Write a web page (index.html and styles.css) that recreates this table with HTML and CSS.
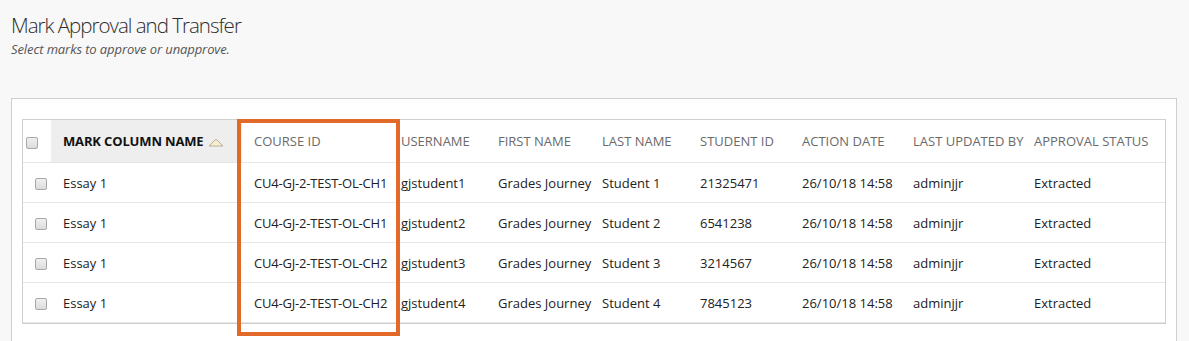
FILE: index.html
```html
<!DOCTYPE html>
<html lang="en">
<head>
<meta charset="utf-8">
<title>Mark Approval and Transfer</title>
<link rel="stylesheet" href="styles.css">
</head>
<body>
<div class="page">
  <h1 class="title">Mark Approval and Transfer</h1>
  <p class="subtitle">Select marks to approve or unapprove.</p>
  <div class="panel">
    <table class="grid">
      <colgroup>
        <col class="c0"><col class="c1"><col class="c2"><col class="c3"><col class="c4">
        <col class="c5"><col class="c6"><col class="c7"><col class="c8"><col class="c9">
      </colgroup>
      <thead>
        <tr>
          <th class="chk-cell head-chk"><span class="chk"></span></th>
          <th class="sorted">MARK COLUMN NAME <svg class="sort" width="16" height="9" viewBox="0 0 16 9"><path d="M1 8 L8 1.2 L15 8 Z" fill="#f7efcb" stroke="#b8b09a" stroke-width="1"/></svg></th>
          <th>COURSE ID</th>
          <th>USERNAME</th>
          <th>FIRST NAME</th>
          <th>LAST NAME</th>
          <th>STUDENT ID</th>
          <th>ACTION DATE</th>
          <th>LAST UPDATED BY</th>
          <th>APPROVAL STATUS</th>
        </tr>
      </thead>
      <tbody>
        <tr>
          <td class="chk-cell"><span class="chk"></span></td>
          <td>Essay 1</td><td class="cid">CU4-GJ-2-TEST-OL-CH1</td><td>gjstudent1</td><td>Grades Journey</td><td>Student 1</td><td>21325471</td><td>26/10/18 14:58</td><td>adminjjr</td><td>Extracted</td>
        </tr>
        <tr>
          <td class="chk-cell"><span class="chk"></span></td>
          <td>Essay 1</td><td class="cid">CU4-GJ-2-TEST-OL-CH1</td><td>gjstudent2</td><td>Grades Journey</td><td>Student 2</td><td>6541238</td><td>26/10/18 14:58</td><td>adminjjr</td><td>Extracted</td>
        </tr>
        <tr>
          <td class="chk-cell"><span class="chk"></span></td>
          <td>Essay 1</td><td class="cid">CU4-GJ-2-TEST-OL-CH2</td><td>gjstudent3</td><td>Grades Journey</td><td>Student 3</td><td>3214567</td><td>26/10/18 14:58</td><td>adminjjr</td><td>Extracted</td>
        </tr>
        <tr>
          <td class="chk-cell"><span class="chk"></span></td>
          <td>Essay 1</td><td class="cid">CU4-GJ-2-TEST-OL-CH2</td><td>gjstudent4</td><td>Grades Journey</td><td>Student 4</td><td>7845123</td><td>26/10/18 14:58</td><td>adminjjr</td><td>Extracted</td>
        </tr>
      </tbody>
    </table>
    <div class="highlight"></div>
  </div>
</div>
</body>
</html>
```

FILE: styles.css
```css
* { box-sizing: border-box; }
html, body { margin: 0; padding: 0; background: #f8f8f8; }
body { font-family: "Open Sans", "Liberation Sans", sans-serif; color: #333; }
.page { padding: 10px 12px 0 11px; }
.title {
  margin: 0;
  font-size: 20.5px;
  line-height: 30px;
  font-weight: 300;
  letter-spacing: -1px;
  color: #2e2e2e;
}
.subtitle {
  margin: 1px 0 0 0;
  font-size: 13px;
  line-height: 17px;
  font-style: italic;
  letter-spacing: -0.1px;
  color: #555;
}
.panel {
  position: relative;
  margin-top: 40px;
  background: #fff;
  border: 1px solid #cfcfcf;
  border-bottom: none;
  padding: 20px 10px 30px 10px;
}
.grid {
  width: 1144px;
  border-collapse: separate;
  border-spacing: 0;
  table-layout: fixed;
  border: 1px solid #cfcfcf;
}
.c0 { width: 28px; }
.c1 { width: 191px; }
.c2 { width: 147px; }
.c3 { width: 97px; }
.c4 { width: 104px; }
.c5 { width: 98px; }
.c6 { width: 102px; }
.c7 { width: 111px; }
.c8 { width: 121px; }
.c9 { width: 143px; }
.grid th, .grid td {
  padding: 0 0 0 12px;
  text-align: left;
  white-space: nowrap;
  font-size: 13px;
  border-bottom: 1px solid #e6e6e6;
}
.grid th {
  height: 43px;
  font-weight: 400;
  color: #6a6a6a;
}
.grid td {
  height: 40px;
  color: #222;
}
.grid td.cid { letter-spacing: -0.2px; }
.grid th.sorted {
  background: #eeeeee;
  color: #111;
  font-weight: 700;
  letter-spacing: -0.15px;
}
.sort { vertical-align: -1px; margin-left: 1px; }
.grid .chk-cell { padding: 0 0 0 12px; }
.grid .head-chk { padding-left: 3px; }
.chk {
  display: inline-block;
  width: 12px;
  height: 12px;
  border: 1px solid #a8a8a8;
  border-radius: 2px;
  background: linear-gradient(#f0f0f0, #dcdcdc);
  vertical-align: middle;
}
.highlight {
  position: absolute;
  left: 225px;
  top: 20px;
  width: 163px;
  height: 217px;
  border: 4px solid #e2692a;
  pointer-events: none;
}
```
